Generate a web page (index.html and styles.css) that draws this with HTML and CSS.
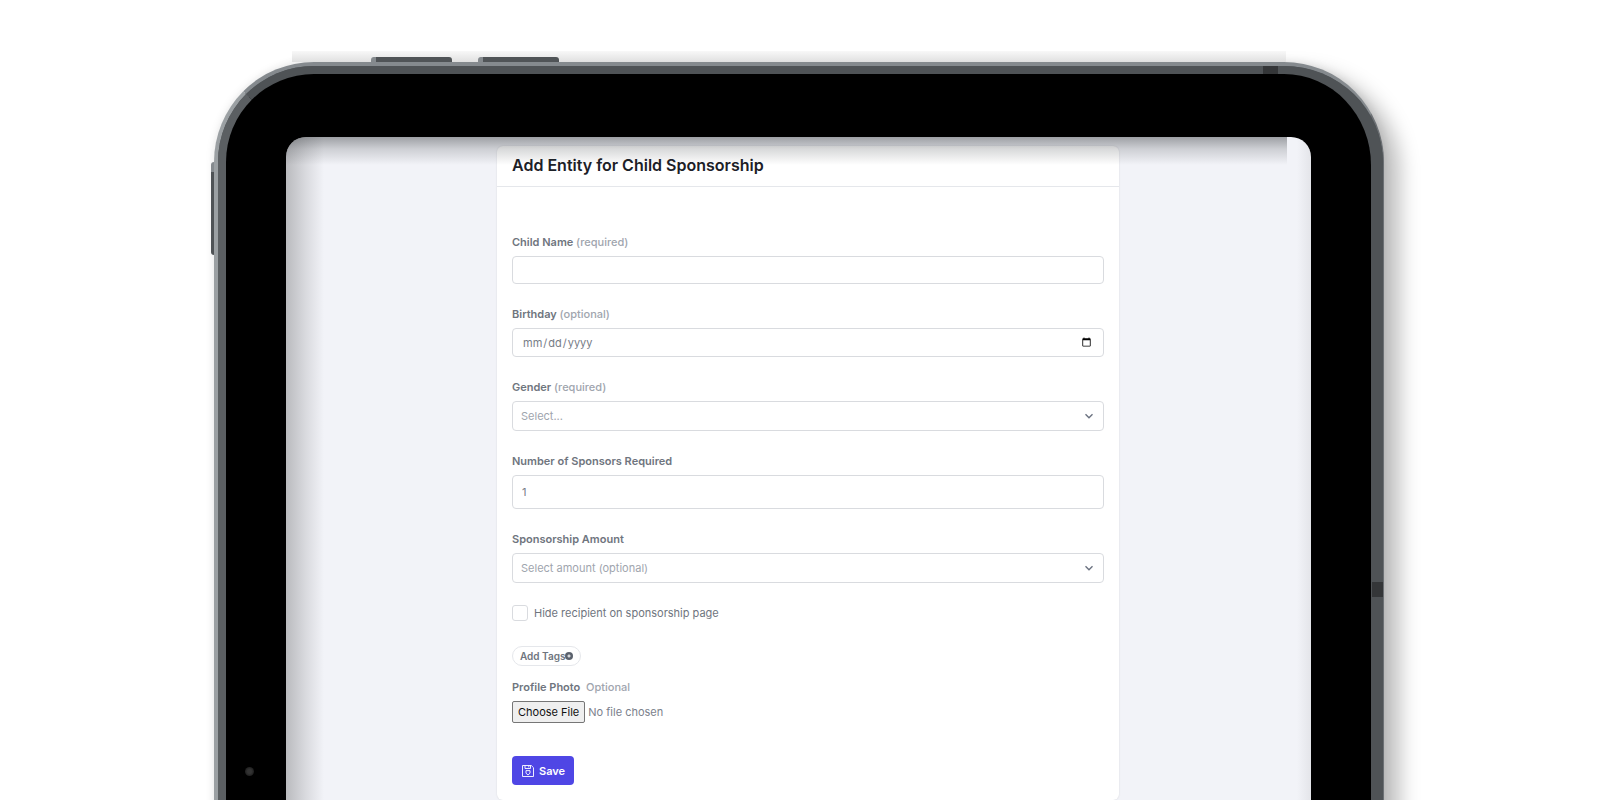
FILE: index.html
```html
<!DOCTYPE html>
<html lang="en">

<head>
    <meta charset="UTF-8">
    <meta name="viewport" content="width=device-width, initial-scale=1.0">
    <title>Add Entity for Child Sponsorship</title>
    <link rel="stylesheet" href="styles.css">
</head>

<body>
    <div class="stage">
        <div class="tablet">
            <span class="key key-up"></span>
            <span class="key key-down"></span>
            <span class="key-side"></span>
            <div class="rim">
                <span class="antenna antenna-top"></span>
                <span class="antenna antenna-right"></span>
                <div class="bezel">
                    <span class="camera"></span>
                    <main class="screen">
                        <form class="card">
                            <header class="card-header">
                                <h1>Add Entity for Child Sponsorship</h1>
                            </header>
                            <div class="card-body">
                                <div class="field">
                                    <label for="name">Child Name <span>(required)</span></label>
                                    <input class="control" type="text" id="name">
                                </div>
                                <div class="field">
                                    <label for="birthday">Birthday <span>(optional)</span></label>
                                    <input class="control control-date" type="date" id="birthday">
                                </div>
                                <div class="field">
                                    <label for="gender">Gender <span>(required)</span></label>
                                    <div class="select">
                                        <select class="control" id="gender">
                                            <option>Select...</option>
                                        </select>
                                        <svg class="chevron" viewBox="0 0 10 10"><path d="M1.5 3.2 5 6.7l3.5-3.5"/></svg>
                                    </div>
                                </div>
                                <div class="field">
                                    <label for="sponsors">Number of Sponsors Required</label>
                                    <input class="control control-number" type="text" inputmode="numeric" id="sponsors" value="1">
                                </div>
                                <div class="field">
                                    <label for="amount">Sponsorship Amount</label>
                                    <div class="select">
                                        <select class="control" id="amount">
                                            <option>Select amount (optional)</option>
                                        </select>
                                        <svg class="chevron" viewBox="0 0 10 10"><path d="M1.5 3.2 5 6.7l3.5-3.5"/></svg>
                                    </div>
                                </div>
                                <div class="check">
                                    <input type="checkbox" id="hide">
                                    <label for="hide">Hide recipient on sponsorship page</label>
                                </div>
                                <button class="tag" type="button">Add Tags<svg viewBox="0 0 8 8"><circle cx="4" cy="4" r="4"/><path d="M4 2.4v3.2M2.4 4h3.2"/></svg></button>
                                <div class="photo">
                                    <label for="photo">Profile Photo <span>Optional</span></label>
                                    <input type="file" id="photo">
                                </div>
                                <button class="save" type="submit">
                                    <svg viewBox="0 0 12 12"><path d="M.5.5h8.8l2.2 2.2v8.8H.5zM3 .5v3h5.5v-3M6.8.8v1.6"/><path d="M4 5.6h4v2.6L6 10 4 8.2z"/></svg>
                                    Save
                                </button>
                            </div>
                        </form>
                    </main>
                </div>
            </div>
        </div>
    </div>
</body>

</html>
```
FILE: styles.css
```css
* {
    box-sizing: border-box;
}

body {
    margin: 0;
    background: #fff;
    color: #6f757e;
    font-family: Inter, "Liberation Sans", sans-serif;
    font-size: 11px;
    line-height: 16px;
}

.stage {
    height: 100vh;
    overflow: hidden;
    padding: 62px 18px 0 16px;
}

/* tablet frame */
.tablet {
    position: relative;
    max-width: 1170px;
    margin: 0 auto;
    border: solid #858a8e;
    border-width: 4px 1px 4px 4px;
    border-left-color: #9ba0a3;
    border-right-color: #6c7074;
    border-radius: 100px;
    background: #4f5356;
    box-shadow: 16px 10px 20px rgba(0, 0, 0, .25), 0 0 10px rgba(0, 0, 0, .1);
}

/* soft light along the top edge */
.tablet::before {
    content: "";
    position: absolute;
    top: -15px;
    left: 74px;
    right: 97px;
    height: 11px;
    background: linear-gradient(#f8f8f8, #e0e0e0);
}

.key {
    position: absolute;
    top: -9px;
    width: 81px;
    height: 5px;
    background: #505457;
    border-left: 5px solid #858a8e;
    border-radius: 3px 3px 0 0;
}

.key-up {
    left: 153px;
}

.key-down {
    left: 260px;
}

.key-side {
    position: absolute;
    top: 96px;
    left: -7px;
    width: 3px;
    height: 93px;
    background: #4f5356;
    border-top: 10px solid #858a8e;
    border-radius: 3px 0 0 3px;
}

.rim {
    position: relative;
    border: solid #4f5356;
    border-width: 8px 12px 8px 8px;
    border-left-color: #5b5f62;
    border-radius: 96px 99px 99px 96px;
    background: #000;
}

.antenna {
    position: absolute;
    background: #343638;
}

.antenna-top {
    top: -8px;
    right: 93px;
    width: 15px;
    height: 8px;
}

.antenna-right {
    top: 508px;
    right: -12px;
    width: 11px;
    height: 15px;
}

.bezel {
    position: relative;
    padding: 63px 60px;
}

.camera {
    position: absolute;
    top: 693px;
    left: 19px;
    width: 9px;
    height: 9px;
    border-radius: 50%;
    background: radial-gradient(#333 30%, #111);
}

.screen {
    position: relative;
    padding: 9px 192px 60px 211px;
    overflow: hidden;
    border-radius: 20px;
    background: #f2f3f8;
}

/* shade cast by the bezel on the glass */
.screen::after {
    content: "";
    position: absolute;
    inset: 0;
    pointer-events: none;
    background:
        linear-gradient(rgba(40, 44, 48, .42), rgba(40, 44, 48, .18) 12px, transparent 28px) 0 0 / calc(100% - 24px) 100% no-repeat,
        linear-gradient(to right, rgba(40, 40, 40, .28), rgba(40, 40, 40, .12) 20px, transparent 38px),
        linear-gradient(to left, rgba(40, 40, 40, .07), transparent 14px);
}

/* form card */
.card {
    background: #fff;
    border-radius: 6px;
    box-shadow: 0 0 2px rgba(0, 0, 0, .12);
}

.card-header {
    padding: 7px 15px 9px;
    border-bottom: 1px solid #e5e7eb;
}

h1 {
    margin: 0;
    color: #1c2027;
    font-size: 16px;
    font-weight: 600;
    line-height: 24px;
}

.card-body {
    padding: 47px 15px 15px;
}

.field {
    display: flex;
    flex-direction: column;
    gap: 6px;
    margin-bottom: 22px;
}

.field label,
.photo label {
    font-weight: 600;
}

.field label span,
.photo label span {
    color: #a0a5ae;
    font-weight: 500;
}

.control {
    width: 100%;
    height: 28px;
    margin: 0;
    padding: 0 9px;
    border: 1px solid #d9dbdf;
    border-radius: 4px;
    background: #fff;
    color: #777d87;
    font: inherit;
}

.control-date {
    height: 29px;
}

.control-number {
    height: 34px;
}

.select {
    position: relative;
}

.select .control {
    display: block;
    height: 30px;
    padding: 0 8px;
    appearance: none;
    color: #a0a5ae;
}

.chevron {
    position: absolute;
    top: 10px;
    right: 10px;
    width: 10px;
    height: 10px;
    fill: none;
    stroke: #6b7280;
    stroke-width: 1.4;
    pointer-events: none;
}

.check {
    display: flex;
    align-items: center;
    gap: 6px;
    margin-bottom: 25px;
}

.check input {
    appearance: none;
    width: 16px;
    height: 16px;
    margin: 0;
    border: 1px solid #d9dbdf;
    border-radius: 3px;
}

.tag {
    display: flex;
    align-items: center;
    height: 20px;
    margin-bottom: 13px;
    padding: 0 7px;
    border: 1px solid #e5e7eb;
    border-radius: 10px;
    background: #fff;
    color: #6f757e;
    font: inherit;
    font-size: 10px;
    font-weight: 600;
}

.tag svg {
    width: 8px;
    height: 8px;
    fill: #5b626d;
    stroke: #fff;
    stroke-width: 0;
}

.tag path {
    stroke-width: 1;
}

.photo {
    display: flex;
    flex-direction: column;
    gap: 6px;
    margin-bottom: 33px;
}

.photo label span {
    margin-left: 3px;
}

.photo input {
    height: 22px;
    color: #7b818c;
    font: inherit;
}

.photo input::file-selector-button {
    height: 22px;
    margin: 0 3px 0 0;
    padding: 0 5px;
    border: 1px solid #767676;
    border-radius: 2px;
    background: #efefef;
    color: #111;
    font: inherit;
}

.save {
    display: flex;
    align-items: center;
    gap: 5px;
    height: 29px;
    padding: 0 9px 0 10px;
    border: 0;
    border-radius: 4px;
    background: #4f46e5;
    color: #fff;
    font: inherit;
    font-weight: 600;
}

.save svg {
    width: 12px;
    height: 12px;
    fill: none;
    stroke: #fff;
    stroke-width: .9;
}
```
